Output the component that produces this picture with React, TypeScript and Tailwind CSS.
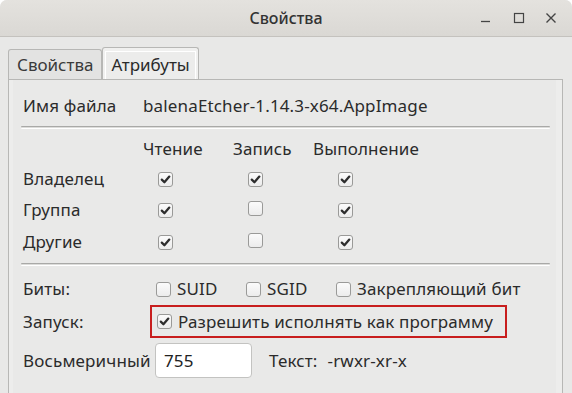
import React from "react";

const Check = ({ checked }: { checked: boolean }) => (
  <span className="inline-flex h-[15px] w-[15px] shrink-0 items-center justify-center rounded-[3px] border border-[#9a9a98] bg-gradient-to-b from-[#fbfbfb] to-[#ececec]">
    {checked && (
      <svg width="11" height="11" viewBox="0 0 11 11">
        <path d="M1.8 5.6 L4.4 8.2 L9.3 2.6" fill="none" stroke="#2e2e2e" strokeWidth="2.3" strokeLinecap="round" strokeLinejoin="round" />
      </svg>
    )}
  </span>
);

const Sep = () => (
  <div className="my-0 h-[3px] border-t border-[#a9a9a7] border-b border-b-white bg-[#dcdcda] ml-[-2px] mr-[6px] rounded-[1px]" />
);

export default function App() {
  const rows: [string, boolean, boolean, boolean][] = [
    ["Владелец", true, true, true],
    ["Группа", true, false, true],
    ["Другие", true, false, true],
  ];
  return (
    <div
      className="h-[393px] w-[572px] overflow-hidden rounded-t-[7px] bg-[#e8e8e7] text-[17px] tracking-[0.15px] text-[#2b2b2b]"
      style={{ fontFamily: '"Noto Sans", "DejaVu Sans", sans-serif' }}
    >
      <div className="relative flex h-[37px] items-center justify-center border-b border-[#c4c2be] bg-gradient-to-b from-[#e4e2de] to-[#dad8d4] tracking-normal">
        <span className="text-[16px] font-medium text-[#333]">Свойства</span>
        <div className="absolute right-0 top-0 flex h-[36px] items-center">
          <svg width="12" height="12" viewBox="0 0 12 12" className="mr-[21px]">
            <path d="M1 9.5 H10" stroke="#444" strokeWidth="1.3" />
          </svg>
          <svg width="12" height="12" viewBox="0 0 12 12" className="mr-[20px]">
            <rect x="1.5" y="1.5" width="9" height="9" fill="none" stroke="#444" strokeWidth="1.2" />
          </svg>
          <svg width="12" height="12" viewBox="0 0 12 12" className="mr-[15px]">
            <path d="M1.5 1.5 L10.5 10.5 M10.5 1.5 L1.5 10.5" stroke="#444" strokeWidth="1.4" />
          </svg>
        </div>
      </div>

      <div className="px-[8px] pt-[10px]">
        <div className="flex items-end tracking-normal">
          <div className="flex h-[30px] items-center rounded-t-[3px] border border-b-0 border-[#b7b7b5] bg-[#e3e3e2] px-[8px] text-[17px] text-[#3a3a3a]">
            Свойства
          </div>
          <div className="flex h-[32px] items-center rounded-t-[3px] border border-b-0 border-[#b7b7b5] bg-[#f0f0ef] px-[2px] pt-[2px]">
            <div className="flex h-[28px] items-center border border-b-0 border-white bg-[#ececeb] px-[5px] text-[17px] text-[#2a2a2a]">
              Атрибуты
            </div>
          </div>
        </div>
        <div className="h-[320px] w-[555px] border border-[#b7b7b5] bg-[#e9e9e8]">
          <div className="h-full border-l-[4px] border-r-[6px] border-[#ededec] pl-[10px] pt-[14px]">
            <div className="flex h-[24px] items-center">
              <span className="w-[120px]">Имя файла</span>
              <span>balenaEtcher-1.14.3-x64.AppImage</span>
            </div>
            <div className="mt-[8px]">
              <Sep />
            </div>
            <div className="mt-[8px] flex h-[24px] items-center">
              <span className="w-[120px]" />
              <span className="w-[90px]">Чтение</span>
              <span className="w-[80px]">Запись</span>
              <span>Выполнение</span>
            </div>
            {rows.map(([name, r, w, x], i) => (
              <div key={name} className={`${i === 0 ? "mt-[6px]" : i === 1 ? "mt-[7px]" : "mt-[8px]"} flex h-[24px] items-center`}>
                <span className="w-[135px]">{name}</span>
                <span className="w-[90px]"><Check checked={r} /></span>
                <span className="w-[90px]"><Check checked={w} /></span>
                <span><Check checked={x} /></span>
              </div>
            ))}
            <div className="mt-[9px]">
              <Sep />
            </div>
            <div className="mt-[11px] flex h-[24px] items-center">
              <span className="w-[133px]">Биты:</span>
              <span className="flex w-[90px] items-center gap-[6px]"><Check checked={false} />SUID</span>
              <span className="flex w-[90px] items-center gap-[6px]"><Check checked={false} />SGID</span>
              <span className="flex items-center gap-[6px]"><Check checked={false} />Закрепляющий бит</span>
            </div>
            <div className="mt-[4px] flex h-[33px] items-center">
              <span className="w-[127px]">Запуск:</span>
              <span className="flex h-[33px] items-center gap-[6px] border-2 border-[#c81e1e] pl-[5px] pr-[12px]">
                <Check checked={true} />Разрешить исполнять как программу
              </span>
            </div>
            <div className="mt-[5px] flex h-[35px] items-center">
              <span className="w-[132px]">Восьмеричный</span>
              <span className="flex h-[35px] w-[97px] items-center rounded-[4px] border border-[#c3c3c1] bg-white pl-[8px] text-[#222]">755</span>
              <span className="ml-[17px]">Текст:</span>
              <span className="ml-[10px]">-rwxr-xr-x</span>
            </div>
          </div>
        </div>
      </div>
    </div>
  );
}
